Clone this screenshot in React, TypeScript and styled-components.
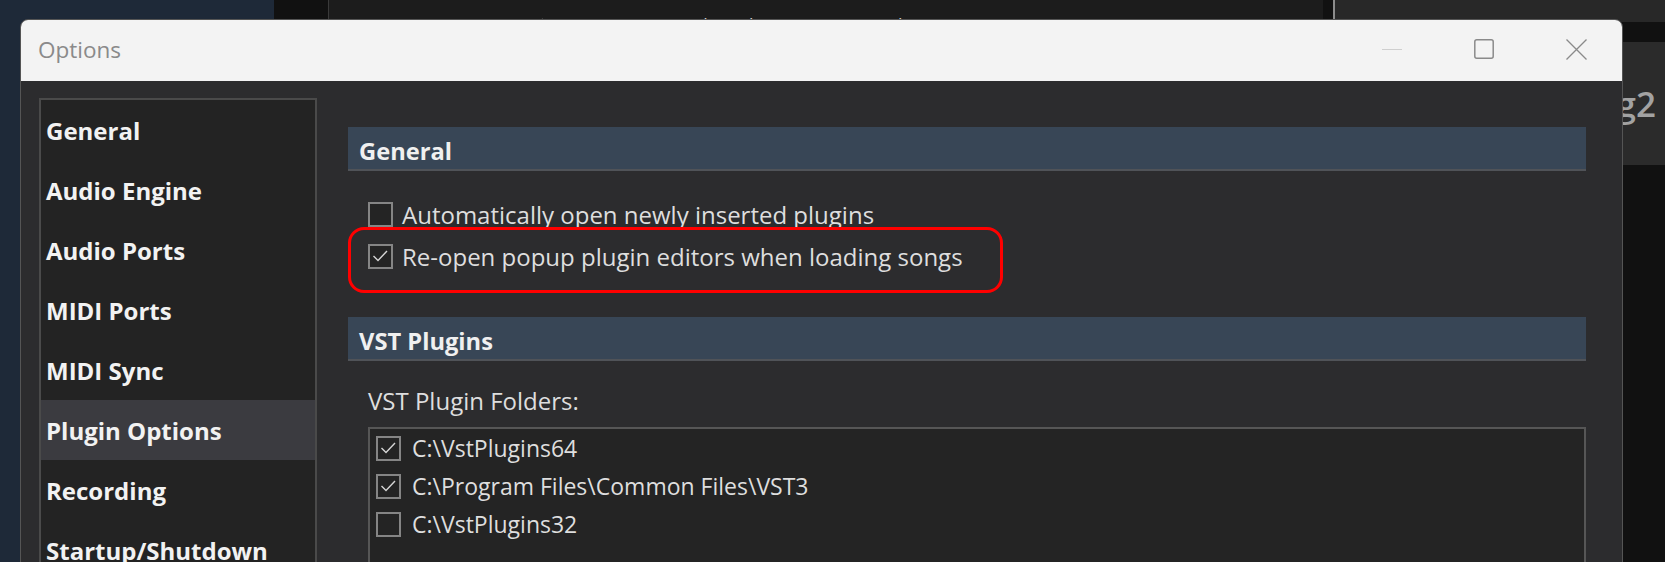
import { FunctionComponent } from 'react'
import styled, { createGlobalStyle } from 'styled-components'

const GlobalStyle = createGlobalStyle`
  html, body {
    margin: 0;
    padding: 0;
    background: #111111;
    overflow: hidden;
  }
  * {
    box-sizing: border-box;
  }
`

const FONT = `"Open Sans", "Noto Sans", "Liberation Sans", sans-serif`

// ---- desktop behind the dialog ----

const Desktop = styled.div`
  position: relative;
  width: 100%;
  height: 562px;
  overflow: hidden;
  display: flex;
  font-family: ${FONT};
`

const NavyStrip = styled.div`
  width: 274px;
  flex-shrink: 0;
  background: #1e2938;
`

const GripColumn = styled.div`
  width: 55px;
  flex-shrink: 0;
  background: #111111;
  border-right: 1px solid #3a3a3a;
  padding: 11px 0 0 24px;
`

const MainArea = styled.div`
  width: 994px;
  flex-shrink: 0;
  background: #1c1c1c;
`

const Toolbar = styled.div`
  display: flex;
  align-items: flex-start;
  height: 60px;
  padding-top: 13px;
`

const ToolText = styled.span<{ $left: number }>`
  margin-left: ${(p) => p.$left}px;
  font-size: 18px;
  line-height: 24px;
  color: #cfcfcf;
  white-space: nowrap;
`

const ToolIcon = styled.span<{ $left: number; $drop: number }>`
  margin-left: ${(p) => p.$left}px;
  display: flex;
  padding-top: ${(p) => p.$drop}px;
`

const DarkGap = styled.div`
  width: 12px;
  flex-shrink: 0;
  background: #111111;
  border-right: 2px solid #8c8c8c;
`

const RightColumn = styled.div`
  flex: 1;
  display: flex;
  flex-direction: column;
  background: #111111;
`

const RightTop = styled.div`
  height: 22px;
  background: #282828;
`

const RightSpacer = styled.div`
  height: 20px;
`

const RigPanel = styled.div`
  height: 123px;
  background: #2b2b2b;
  display: flex;
  align-items: center;
  justify-content: flex-end;
  padding-right: 9px;
  font-size: 35px;
  font-weight: 600;
  color: #a2a2a2;
`

// ---- the Options window ----

const Window = styled.div`
  position: absolute;
  left: 20px;
  top: 19px;
  width: 1603px;
  bottom: -10px;
  border: 1px solid #555555;
  border-radius: 8px 8px 0 0;
  overflow: hidden;
  display: flex;
  flex-direction: column;
  background: #2c2c2e;
`

const TitleBar = styled.div`
  height: 61px;
  flex-shrink: 0;
  background: #f3f3f3;
  display: flex;
  align-items: center;
`

const Title = styled.div`
  flex: 1;
  padding-left: 17px;
  padding-bottom: 2px;
  font-size: 22.5px;
  color: #8a8a8a;
`

const CaptionButton = styled.div`
  width: 92px;
  height: 100%;
  display: flex;
  align-items: center;
  justify-content: center;
  padding-bottom: 3px;
`

const Body = styled.div`
  flex: 1;
  display: flex;
  gap: 31px;
  padding: 17px 36px 0 18px;
  min-height: 0;
`

const Sidebar = styled.div`
  width: 278px;
  flex-shrink: 0;
  background: #232323;
  border: 2px solid #4a4a4a;
  border-bottom: none;
  display: flex;
  flex-direction: column;
`

const NavItem = styled.div<{ $active?: boolean }>`
  height: 60px;
  flex-shrink: 0;
  display: flex;
  align-items: center;
  padding-left: 5px;
  font-size: 24px;
  font-weight: 700;
  color: #f2f2f2;
  background: ${(p) => (p.$active ? '#3b3b40' : 'transparent')};
  white-space: nowrap;
`

const Content = styled.div`
  flex: 1;
  display: flex;
  flex-direction: column;
  padding-top: 29px;
  min-width: 0;
`

const SectionHeader = styled.div<{ $gapBefore?: number }>`
  height: 44px;
  flex-shrink: 0;
  margin-top: ${(p) => p.$gapBefore ?? 0}px;
  background: #384656;
  border-bottom: 2px solid #505358;
  display: flex;
  align-items: center;
  padding: 5px 0 0 11px;
  font-size: 23.7px;
  font-weight: 700;
  color: #f0f0f0;
`

const OptionRows = styled.div`
  display: flex;
  flex-direction: column;
  margin-top: 22px;
`

const OptionRow = styled.label`
  position: relative;
  height: 42px;
  display: flex;
  align-items: center;
  gap: 9px;
  padding-left: 20px;
  font-size: 24px;
  color: #dedede;
  white-space: nowrap;
`

const Highlight = styled.span`
  position: absolute;
  left: 0;
  top: -8px;
  width: 655px;
  height: 66px;
  border: 3px solid #ff0000;
  border-radius: 16px;
  pointer-events: none;
`

const FieldLabel = styled.div`
  margin: 23px 0 11px 20px;
  height: 32px;
  display: flex;
  align-items: center;
  font-size: 24px;
  color: #dedede;
`

const FolderList = styled.div`
  flex: 1;
  margin-left: 20px;
  background: #242424;
  border: 2px solid #565656;
  border-bottom: none;
  padding: 0 6px;
  display: flex;
  flex-direction: column;
`

const FolderRow = styled.div`
  height: 38px;
  display: flex;
  align-items: center;
  gap: 11px;
  font-size: 23px;
  color: #dedede;
  white-space: nowrap;
`

const Box = styled.span`
  width: 25px;
  height: 25px;
  flex-shrink: 0;
  border: 2px solid #858585;
  background: #242424;
  display: flex;
  align-items: center;
  justify-content: center;
`

const CheckBox: FunctionComponent<{ checked?: boolean }> = ({ checked }) => (
  <Box>
    {checked && (
      <svg width="21" height="21" viewBox="0 0 21 21">
        <polyline points="3.5,10 8,14.5 17,5" fill="none" stroke="#d6d6d6" strokeWidth="1.4" />
      </svg>
    )}
  </Box>
)

const navItems = [
  'General',
  'Audio Engine',
  'Audio Ports',
  'MIDI Ports',
  'MIDI Sync',
  'Plugin Options',
  'Recording',
  'Startup/Shutdown',
]

const folders = [
  { path: 'C:\\VstPlugins64', checked: true },
  { path: 'C:\\Program Files\\Common Files\\VST3', checked: true },
  { path: 'C:\\VstPlugins32', checked: false },
]

const App: FunctionComponent = () => {
  return (
    <>
      <GlobalStyle />
      <Desktop>
        <NavyStrip />
        <GripColumn>
          <svg width="12" height="10" viewBox="0 0 12 10">
            <rect x="1" y="1" width="3" height="3" fill="#8a8a8a" />
            <rect x="8" y="6" width="3" height="3" fill="#8a8a8a" />
          </svg>
        </GripColumn>
        <MainArea>
          <Toolbar>
            <ToolIcon $left={204} $drop={5}>
              <svg width="12" height="14" viewBox="0 0 12 14">
                <path d="M10 1 L2 13" stroke="#9a9a9a" strokeWidth="2" />
              </svg>
            </ToolIcon>
            <ToolText $left={26}>Songs</ToolText>
            <ToolText $left={52}>Keyboard</ToolText>
            <ToolText $left={80}>Get Back</ToolText>
            <ToolText $left={46}>MIDI Monitor</ToolText>
            <ToolIcon $left={116} $drop={0}>
              <svg width="22" height="20" viewBox="0 0 22 20">
                <path d="M0 10 H22 V12 L14 18 V20 H8 V18 L0 12 Z" fill="#9a9a9a" />
              </svg>
            </ToolIcon>
            <ToolText $left={34}>0</ToolText>
          </Toolbar>
        </MainArea>
        <DarkGap />
        <RightColumn>
          <RightTop />
          <RightSpacer />
          <RigPanel>Song2</RigPanel>
        </RightColumn>

        <Window>
          <TitleBar>
            <Title>Options</Title>
            <CaptionButton>
              <svg width="20" height="20" viewBox="0 0 20 20">
                <line x1="0" y1="10.5" x2="20" y2="10.5" stroke="#cfcfcf" strokeWidth="1.2" />
              </svg>
            </CaptionButton>
            <CaptionButton>
              <svg width="20" height="20" viewBox="0 0 20 20">
                <rect x="0.8" y="0.8" width="18.4" height="18.4" rx="2" fill="none" stroke="#8a8a8a" strokeWidth="1.5" />
              </svg>
            </CaptionButton>
            <CaptionButton>
              <svg width="21" height="21" viewBox="0 0 21 21">
                <path d="M0.5 0.5 L20.5 20.5 M20.5 0.5 L0.5 20.5" stroke="#8a8a8a" strokeWidth="1.3" />
              </svg>
            </CaptionButton>
          </TitleBar>
          <Body>
            <Sidebar>
              {navItems.map((item) => (
                <NavItem key={item} $active={item === 'Plugin Options'}>
                  {item}
                </NavItem>
              ))}
            </Sidebar>
            <Content>
              <SectionHeader>General</SectionHeader>
              <OptionRows>
                <OptionRow>
                  <CheckBox />
                  Automatically open newly inserted plugins
                </OptionRow>
                <OptionRow>
                  <Highlight />
                  <CheckBox checked />
                  Re-open popup plugin editors when loading songs
                </OptionRow>
              </OptionRows>
              <SectionHeader $gapBefore={40}>VST Plugins</SectionHeader>
              <FieldLabel>VST Plugin Folders:</FieldLabel>
              <FolderList>
                {folders.map((f) => (
                  <FolderRow key={f.path}>
                    <CheckBox checked={f.checked} />
                    {f.path}
                  </FolderRow>
                ))}
              </FolderList>
            </Content>
          </Body>
        </Window>
      </Desktop>
    </>
  )
}

export default App
